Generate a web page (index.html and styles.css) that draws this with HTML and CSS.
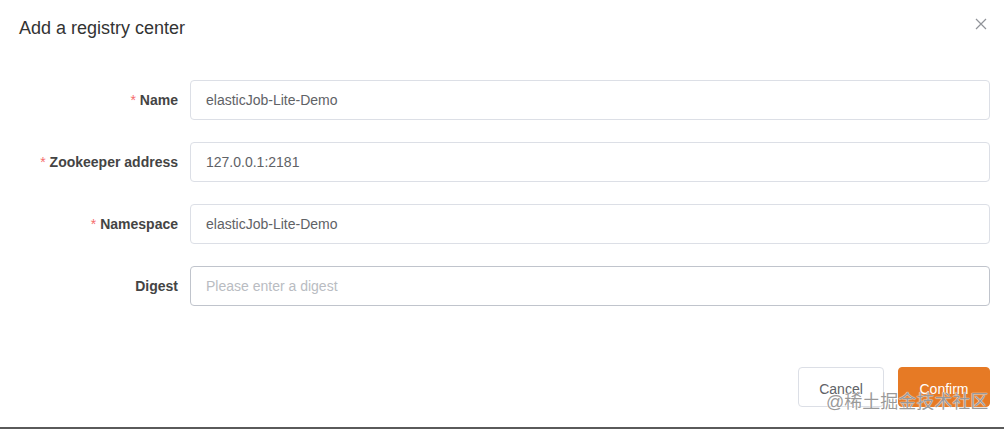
FILE: index.html
```html
<!DOCTYPE html>
<html>
<head>
<meta charset="utf-8">
<link rel="stylesheet" href="styles.css">
</head>
<body>
<div class="dialog">
  <div class="header">
    <span class="title">Add a registry center</span>
    <button class="close" aria-label="Close">
      <svg width="12" height="12" viewBox="0 0 12 12"><path d="M1 1L11 11M11 1L1 11" stroke="#909399" stroke-width="1.2" fill="none"/></svg>
    </button>
  </div>
  <div class="body">
    <div class="row">
      <label class="label"><span class="req">*</span> Name</label>
      <div class="input">elasticJob-Lite-Demo</div>
    </div>
    <div class="row">
      <label class="label"><span class="req">*</span> Zookeeper address</label>
      <div class="input">127.0.0.1:2181</div>
    </div>
    <div class="row">
      <label class="label"><span class="req">*</span> Namespace</label>
      <div class="input">elasticJob-Lite-Demo</div>
    </div>
    <div class="row">
      <label class="label">Digest</label>
      <div class="input hover placeholder">Please enter a digest</div>
    </div>
  </div>
  <div class="footer">
    <button class="btn">Cancel</button>
    <button class="btn primary">Confirm</button>
  </div>
  <div class="watermark">@稀土掘金技术社区</div>
</div>
</body>
</html>
```

FILE: styles.css
```css
html, body {
  margin: 0;
  padding: 0;
  background: #fff;
}
body {
  font-family: "Liberation Sans", Arial, "Noto Sans CJK SC", sans-serif;
  width: 1004px;
  height: 429px;
  overflow: hidden;
}
.dialog {
  position: relative;
  height: 427px;
  border-bottom: 2px solid #5a5a5a;
  display: flex;
  flex-direction: column;
}
.header {
  height: 80px;
  box-sizing: border-box;
  padding: 18px 17px 0 19px;
  display: flex;
  justify-content: space-between;
  align-items: flex-start;
}
.title {
  font-size: 18px;
  line-height: 20px;
  color: #333;
}
.close {
  border: none;
  background: none;
  padding: 0;
  margin: 0;
  width: 12px;
  height: 12px;
  display: flex;
}
.body {
  display: flex;
  flex-direction: column;
  gap: 22px;
  padding-right: 14px;
}
.row {
  display: flex;
  align-items: center;
}
.label {
  width: 178px;
  padding-right: 12px;
  text-align: right;
  font-size: 14px;
  font-weight: bold;
  color: #444;
}
.req {
  color: #f56c6c;
  font-weight: normal;
}
.input {
  flex: 1;
  height: 40px;
  box-sizing: border-box;
  border: 1px solid #dcdfe6;
  border-radius: 4px;
  padding: 0 15px;
  display: flex;
  align-items: center;
  font-size: 14px;
  color: #606266;
}
.input.hover {
  border-color: #c0c4cc;
}
.input.placeholder {
  color: #b9bcc2;
}
.footer {
  margin-top: auto;
  display: flex;
  justify-content: flex-end;
  gap: 14px;
  padding: 0 14px 20px 0;
}
.btn {
  height: 40px;
  box-sizing: border-box;
  border: 1px solid #dcdfe6;
  border-radius: 4px;
  background: #fff;
  color: #606266;
  font-family: inherit;
  font-size: 14px;
  padding: 3px 0 0 0;
  width: 86px;
}
.btn.primary {
  background: #e67a25;
  border-color: #e67a25;
  color: #fff;
  width: 92px;
}
.watermark {
  position: absolute;
  left: 826px;
  top: 391px;
  font-size: 18px;
  line-height: 22px;
  color: rgba(120, 120, 120, 0.75);
  text-shadow: 0 0 1px #fff, 0 0 1px #fff;
  white-space: nowrap;
}
```
